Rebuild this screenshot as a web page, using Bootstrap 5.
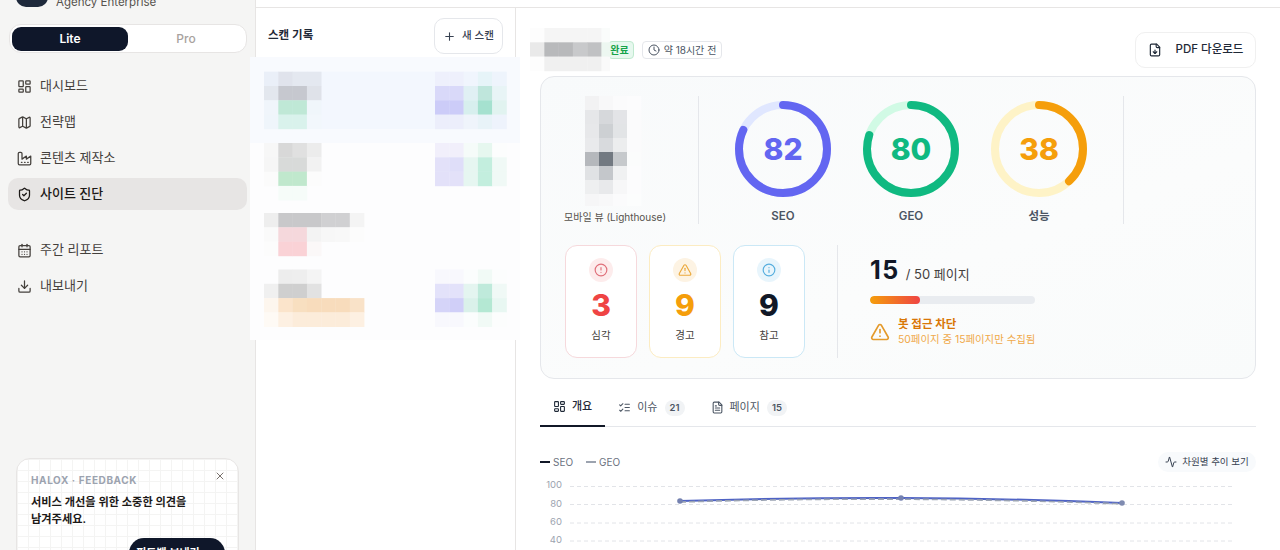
<!DOCTYPE html>
<html lang="ko">
<head>
    <meta charset="UTF-8">
    <meta name="viewport" content="width=device-width, initial-scale=1.0">
    <title>사이트 진단</title>
    <link href="https://cdn.jsdelivr.net/npm/bootstrap@5.3.0/dist/css/bootstrap.min.css" rel="stylesheet">
    <style>
        html, body { height: 550px; overflow: hidden; }
        body { font-family: Inter, "Noto Sans CJK KR", sans-serif; color: #111827; background: #fff; }
        .ico { fill: none; stroke: currentColor; stroke-width: 2; stroke-linecap: round; stroke-linejoin: round; flex: none; }
        .app-root { position: relative; height: 550px; overflow: hidden; }

        .side-bar { width: 256px; flex: none; background: #f5f5f4; border-right: 1px solid #e7e5e4; padding: 0 8px; }
        .brand-row { margin: -23px 8px 0; height: 30px; gap: 8px; }
        .brand-logo { width: 32px; height: 30px; border-radius: 10px; background: #1e293b; }
        .brand-name { font-size: 11.5px; color: #57534e; padding-top: 17px; }
        .plan-switch { margin: 17px 0 0 1px; width: 238px; height: 29px; padding: 2px; background: #fff; border: 1px solid #e7e5e4; border-radius: 12px; }
        .plan-item { flex: 1; border-radius: 9px; font-size: 12px; font-weight: 500; color: #a8a29e; text-align: center; line-height: 24px; height: 24px; }
        .plan-item.on { background: #0f172a; color: #fff; font-weight: 600; }
        .side-nav { margin-top: 17px; gap: 4px; }
        .side-link { height: 32px; width: 239px; padding: 0 9px; gap: 8px; border-radius: 10px; font-size: 13px; color: #44403c; }
        .side-link.on { background: #e7e5e4; color: #1c1917; font-weight: 500; }
        .side-gap { height: 16px; }
        .note-card { position: relative; margin: 156px 0 0 8px; width: 223px; height: 120px; padding: 14px; border: 1px solid #e7e5e4; border-radius: 14px; background-color: #fff; background-image: linear-gradient(#f4f4f3 1px, transparent 1px), linear-gradient(90deg, #f4f4f3 1px, transparent 1px); background-size: 11px 11px; }
        .note-tag { font-size: 10px; font-weight: 700; letter-spacing: .6px; color: #9ca3af; line-height: 14px; }
        .note-text { font-size: 11.2px; font-weight: 600; line-height: 17px; margin-top: 7px; color: #1c1917; }
        .note-close { position: absolute; top: 11px; right: 12px; color: #78716c; }
        .note-btn { position: absolute; top: 79px; right: 13px; width: 96px; height: 30px; background: #0f172a; border-radius: 15px; font-size: 11px; color: #fff; font-weight: 600; }

        .main-wrap { flex: 1; padding-top: 7px; min-width: 0; }
        .main-inner { border-top: 1px solid #e7e5e4; height: 543px; }
        .scan-col { width: 260px; flex: none; border-right: 1px solid #e7e5e4; padding: 10px 12px; }
        .scan-title { font-size: 11.5px; font-weight: 600; color: #1f2937; }
        .scan-new { width: 69px; height: 36px; border: 1px solid #e5e7eb; border-radius: 10px; font-size: 10.5px; font-weight: 500; color: #374151; gap: 6px; padding: 0; background: #fff; }
        .scan-cover { position: absolute; left: 250px; top: 57px; }

        .report-col { flex: 1; padding: 24px 24px 0; min-width: 0; }
        .head-row { height: 36px; }
        .title-slot { position: relative; width: 68px; height: 36px; flex: none; }
        .title-cover { position: absolute; left: -10px; top: -4px; }
        .state-tag { font-size: 10px; font-weight: 600; color: #16a34a; background: #e6f8ee; border: 1px solid #bfe9cf; border-radius: 4px; height: 18px; line-height: 16px; width: 26px; padding-right: 3px; text-align: center; }
        .time-tag { margin-left: 8px; font-size: 10px; color: #4b5563; border: 1px solid #e5e7eb; border-radius: 4px; height: 18px; width: 80px; gap: 4px; background: #fff; }
        .pdf-btn { width: 121px; height: 36px; border: 1px solid #f0f0f0; border-radius: 10px; font-size: 11.5px; font-weight: 500; color: #1f2937; gap: 14px; padding: 0; background: #fff; }
        .score-card { margin-top: 8px; height: 303px; padding: 19px 24px; border: 1px solid #e5e7eb; border-radius: 14px; background: linear-gradient(160deg, #f8fafb, #fbfcfc 60%, #f9fbfb); }
        .top-band { height: 128px; }
        .phone-col { width: 100px; margin-right: 33px; }
        .phone-label { font-size: 10px; color: #57534e; white-space: nowrap; margin-top: 4px; line-height: 14px; }
        .v-rule { width: 1px; background: #e5e7eb; flex: none; }
        .ring-wrap { margin-left: 36px; gap: 32px; margin-right: 36px; }
        .ring-box { position: relative; width: 96px; height: 96px; margin-top: 5px; }
        .ring-num { position: absolute; inset: 0; font-size: 30px; font-weight: 800; line-height: 96px; text-align: center; }
        .ring-label { font-size: 11.5px; font-weight: 600; color: #4b5563; text-align: center; margin-top: 12px; line-height: 14px; }
        .low-band { margin-top: 21px; height: 113px; }
        .sev-wrap { gap: 12px; margin-right: 32px; }
        .sev-card { width: 72px; height: 113px; background: #fff; border: 1px solid; border-radius: 12px; padding-top: 12px; text-align: center; }
        .sev-icon { width: 24px; height: 24px; border-radius: 50%; margin: 0 auto; }
        .sev-num { font-size: 30px; font-weight: 800; line-height: 36px; margin-top: 5px; }
        .sev-label { font-size: 10.5px; color: #44403c; line-height: 14px; margin-top: 6px; }
        .pages-col { margin-left: 32px; width: 170px; }
        .pages-big { font-size: 25px; font-weight: 700; letter-spacing: 1.5px; line-height: 30px; }
        .pages-rest { font-size: 13px; color: #44403c; margin-left: 6px; }
        .pages-head { margin-top: 10px; }
        .pages-bar { height: 8px; width: 165px; margin-top: 11px; background: #e9ecf0; border-radius: 4px; }
        .pages-bar .progress-bar { background: linear-gradient(90deg, #f59e0b, #ef4444); border-radius: 4px; }
        .warn-row { margin-top: 13px; gap: 8px; color: #e49a2b; }
        .warn-title { font-size: 11.5px; font-weight: 700; color: #d97706; line-height: 15px; }
        .warn-sub { font-size: 10.4px; color: #f0a94a; line-height: 15px; }

        .tab-row { margin-top: 8px; border-bottom: 1px solid #e5e7eb; height: 40px; }
        .tab-item { height: 40px; padding: 1px 13px 0; gap: 6px; font-size: 11px; color: #4b5563; }
        .tab-item.on { color: #1f2937; font-weight: 500; border-bottom: 2px solid #111827; }
        .tab-count { font-size: 9.5px; font-weight: 600; color: #4b5563; background: #f1f3f5; border-radius: 10px; width: 20px; height: 16px; line-height: 16px; text-align: center; margin-left: 1px; }
        .legend-row { margin-top: 25px; height: 20px; font-size: 10px; color: #6b7280; }
        .legend-dash { width: 10px; height: 2px; margin-right: 3px; }
        .legend-first { margin-right: 13px; }
        .trend-btn { width: 98px; height: 20px; background: #f8fafc; border-radius: 10px; font-size: 9.5px; color: #374151; gap: 5px; }
        .chart-box { display: block; margin-top: 3px; }
        .chart-box text { font-size: 9.5px; fill: #9ca3af; text-anchor: end; }
    </style>
</head>
<body>
    <svg width="0" height="0" class="position-absolute">
        <symbol id="i-dash" viewBox="0 0 24 24"><rect x="3" y="3" width="7" height="9" rx="1"/><rect x="14" y="3" width="7" height="5" rx="1"/><rect x="14" y="12" width="7" height="9" rx="1"/><rect x="3" y="16" width="7" height="5" rx="1"/></symbol>
        <symbol id="i-map" viewBox="0 0 24 24"><path d="M14.106 5.553a2 2 0 0 0 1.788 0l3.659-1.83A1 1 0 0 1 21 4.619v12.764a1 1 0 0 1-.553.894l-4.553 2.277a2 2 0 0 1-1.788 0l-4.212-2.106a2 2 0 0 0-1.788 0l-3.659 1.83A1 1 0 0 1 3 19.381V6.618a1 1 0 0 1 .553-.894l4.553-2.277a2 2 0 0 1 1.788 0z"/><path d="M15 5.764v15"/><path d="M9 3.236v15"/></symbol>
        <symbol id="i-factory" viewBox="0 0 24 24"><path d="M2 20a2 2 0 0 0 2 2h16a2 2 0 0 0 2-2V8l-7 5V8l-7 5V4a2 2 0 0 0-2-2H4a2 2 0 0 0-2 2Z"/><path d="M17 18h1"/><path d="M12 18h1"/><path d="M7 18h1"/></symbol>
        <symbol id="i-shield" viewBox="0 0 24 24"><path d="M20 13c0 5-3.5 7.5-7.66 8.95a1 1 0 0 1-.67-.01C7.5 20.5 4 18 4 13V6a1 1 0 0 1 1-1c2 0 4.5-1.2 6.24-2.72a1.17 1.17 0 0 1 1.52 0C14.51 3.81 17 5 19 5a1 1 0 0 1 1 1z"/><path d="m9 12 2 2 4-4"/></symbol>
        <symbol id="i-cal" viewBox="0 0 24 24"><path d="M8 2v4"/><path d="M16 2v4"/><rect x="3" y="4" width="18" height="18" rx="2"/><path d="M3 10h18"/><path d="M8 14h.01"/><path d="M12 14h.01"/><path d="M16 14h.01"/><path d="M8 18h.01"/><path d="M12 18h.01"/><path d="M16 18h.01"/></symbol>
        <symbol id="i-down" viewBox="0 0 24 24"><path d="M21 15v4a2 2 0 0 1-2 2H5a2 2 0 0 1-2-2v-4"/><path d="m7 10 5 5 5-5"/><path d="M12 15V3"/></symbol>
        <symbol id="i-x" viewBox="0 0 24 24"><path d="M18 6 6 18"/><path d="m6 6 12 12"/></symbol>
        <symbol id="i-chev" viewBox="0 0 24 24"><path d="m9 18 6-6-6-6"/></symbol>
        <symbol id="i-plus" viewBox="0 0 24 24"><path d="M5 12h14"/><path d="M12 5v14"/></symbol>
        <symbol id="i-clock" viewBox="0 0 24 24"><circle cx="12" cy="12" r="10"/><path d="M12 6v6l4 2"/></symbol>
        <symbol id="i-filedown" viewBox="0 0 24 24"><path d="M15 2H6a2 2 0 0 0-2 2v16a2 2 0 0 0 2 2h12a2 2 0 0 0 2-2V7Z"/><path d="M14 2v4a2 2 0 0 0 2 2h4"/><path d="M12 18v-6"/><path d="m9 15 3 3 3-3"/></symbol>
        <symbol id="i-alert" viewBox="0 0 24 24"><circle cx="12" cy="12" r="10"/><path d="M12 8v4"/><path d="M12 16h.01"/></symbol>
        <symbol id="i-tri" viewBox="0 0 24 24"><path d="m21.73 18-8-14a2 2 0 0 0-3.48 0l-8 14A2 2 0 0 0 4 21h16a2 2 0 0 0 1.73-3"/><path d="M12 9v4"/><path d="M12 17h.01"/></symbol>
        <symbol id="i-info" viewBox="0 0 24 24"><circle cx="12" cy="12" r="10"/><path d="M12 16v-4"/><path d="M12 8h.01"/></symbol>
        <symbol id="i-list" viewBox="0 0 24 24"><path d="m3 17 2 2 4-4"/><path d="m3 7 2 2 4-4"/><path d="M13 6h8"/><path d="M13 12h8"/><path d="M13 18h8"/></symbol>
        <symbol id="i-file" viewBox="0 0 24 24"><path d="M15 2H6a2 2 0 0 0-2 2v16a2 2 0 0 0 2 2h12a2 2 0 0 0 2-2V7Z"/><path d="M14 2v4a2 2 0 0 0 2 2h4"/><path d="M10 9H8"/><path d="M16 13H8"/><path d="M16 17H8"/></symbol>
        <symbol id="i-pulse" viewBox="0 0 24 24"><path d="M22 12h-2.48a2 2 0 0 0-1.93 1.46l-2.35 8.36a.25.25 0 0 1-.48 0L9.24 2.18a.25.25 0 0 0-.48 0l-2.35 8.36A2 2 0 0 1 4.49 12H2"/></symbol>
    </svg>

    <div class="app-root d-flex">
        <!-- 사이드바 -->
        <aside class="side-bar">
            <div class="brand-row d-flex">
                <div class="brand-logo"></div>
                <div class="brand-name">Agency Enterprise</div>
            </div>
            <div class="plan-switch d-flex">
                <div class="plan-item on">Lite</div>
                <div class="plan-item">Pro</div>
            </div>
            <nav class="side-nav d-flex flex-column">
                <div class="side-link d-flex align-items-center"><svg class="ico" width="15" height="15"><use href="#i-dash"/></svg>대시보드</div>
                <div class="side-link d-flex align-items-center"><svg class="ico" width="15" height="15"><use href="#i-map"/></svg>전략맵</div>
                <div class="side-link d-flex align-items-center"><svg class="ico" width="15" height="15"><use href="#i-factory"/></svg>콘텐츠 제작소</div>
                <div class="side-link on d-flex align-items-center"><svg class="ico" width="15" height="15"><use href="#i-shield"/></svg>사이트 진단</div>
                <div class="side-gap"></div>
                <div class="side-link d-flex align-items-center"><svg class="ico" width="15" height="15"><use href="#i-cal"/></svg>주간 리포트</div>
                <div class="side-link d-flex align-items-center"><svg class="ico" width="15" height="15"><use href="#i-down"/></svg>내보내기</div>
            </nav>
            <div class="note-card">
                <div class="note-tag">HALOX · FEEDBACK</div>
                <svg class="ico note-close" width="12" height="12"><use href="#i-x"/></svg>
                <div class="note-text">서비스 개선을 위한 소중한 의견을<br>남겨주세요.</div>
                <div class="note-btn d-flex align-items-center justify-content-center gap-2">피드백 보내기<svg class="ico" width="10" height="10"><use href="#i-chev"/></svg></div>
            </div>
        </aside>

        <div class="main-wrap">
            <div class="main-inner d-flex">
                <!-- 스캔 기록 -->
                <section class="scan-col">
                    <div class="d-flex justify-content-between align-items-center">
                        <div class="scan-title">스캔 기록</div>
                        <button class="btn scan-new d-flex align-items-center justify-content-center"><svg class="ico" width="13" height="13"><use href="#i-plus"/></svg>새 스캔</button>
                    </div>
                </section>

                <!-- 리포트 -->
                <section class="report-col">
                    <div class="head-row d-flex align-items-center">
                        <div class="state-tag order-1">완료</div>
                        <div class="title-slot order-0"><svg class="title-cover" id="titleCover" width="80" height="44"></svg></div>
                        <div class="time-tag d-flex align-items-center justify-content-center order-2"><svg class="ico" width="12" height="12"><use href="#i-clock"/></svg>약 18시간 전</div>
                        <button class="btn pdf-btn d-flex align-items-center justify-content-center ms-auto order-3"><svg class="ico" width="14" height="14"><use href="#i-filedown"/></svg>PDF 다운로드</button>
                    </div>

                    <div class="score-card">
                        <div class="top-band d-flex">
                            <div class="phone-col d-flex flex-column align-items-center">
                                <svg id="phoneCover" width="60" height="112"></svg>
                                <div class="phone-label">모바일 뷰 (Lighthouse)</div>
                            </div>
                            <div class="v-rule"></div>
                            <div class="ring-wrap d-flex">
                                <div>
                                    <div class="ring-box">
                                        <svg width="96" height="96" viewBox="0 0 96 96"><g fill="none" stroke-width="8" transform="rotate(-90 48 48)"><circle cx="48" cy="48" r="44" stroke="#e0e7ff"/><circle cx="48" cy="48" r="44" stroke="#6366f1" stroke-linecap="round" stroke-dasharray="226.7 276.5"/></g></svg>
                                        <div class="ring-num" style="color:#6366f1">82</div>
                                    </div>
                                    <div class="ring-label">SEO</div>
                                </div>
                                <div>
                                    <div class="ring-box">
                                        <svg width="96" height="96" viewBox="0 0 96 96"><g fill="none" stroke-width="8" transform="rotate(-90 48 48)"><circle cx="48" cy="48" r="44" stroke="#d1fae5"/><circle cx="48" cy="48" r="44" stroke="#10b981" stroke-linecap="round" stroke-dasharray="221.2 276.5"/></g></svg>
                                        <div class="ring-num" style="color:#10b981">80</div>
                                    </div>
                                    <div class="ring-label">GEO</div>
                                </div>
                                <div>
                                    <div class="ring-box">
                                        <svg width="96" height="96" viewBox="0 0 96 96"><g fill="none" stroke-width="8" transform="rotate(-90 48 48)"><circle cx="48" cy="48" r="44" stroke="#fef3c7"/><circle cx="48" cy="48" r="44" stroke="#f59e0b" stroke-linecap="round" stroke-dasharray="105 276.5"/></g></svg>
                                        <div class="ring-num" style="color:#f59e0b">38</div>
                                    </div>
                                    <div class="ring-label">성능</div>
                                </div>
                            </div>
                            <div class="v-rule"></div>
                        </div>

                        <div class="low-band d-flex">
                            <div class="sev-wrap d-flex">
                                <div class="sev-card" style="border-color:#f6d9dc">
                                    <div class="sev-icon d-flex align-items-center justify-content-center" style="background:#fdecec;color:#e0707a"><svg class="ico" width="14" height="14"><use href="#i-alert"/></svg></div>
                                    <div class="sev-num" style="color:#ef4444">3</div>
                                    <div class="sev-label">심각</div>
                                </div>
                                <div class="sev-card" style="border-color:#fcecc2">
                                    <div class="sev-icon d-flex align-items-center justify-content-center" style="background:#fdf3e3;color:#eba93c"><svg class="ico" width="14" height="14"><use href="#i-tri"/></svg></div>
                                    <div class="sev-num" style="color:#f59e0b">9</div>
                                    <div class="sev-label">경고</div>
                                </div>
                                <div class="sev-card" style="border-color:#cbe8f6">
                                    <div class="sev-icon d-flex align-items-center justify-content-center" style="background:#e8f5fc;color:#56aede"><svg class="ico" width="14" height="14"><use href="#i-info"/></svg></div>
                                    <div class="sev-num" style="color:#111827">9</div>
                                    <div class="sev-label">참고</div>
                                </div>
                            </div>
                            <div class="v-rule"></div>
                            <div class="pages-col">
                                <div class="pages-head d-flex align-items-baseline"><span class="pages-big">15</span><span class="pages-rest">/ 50 페이지</span></div>
                                <div class="progress pages-bar"><div class="progress-bar" style="width:30%"></div></div>
                                <div class="warn-row d-flex align-items-center">
                                    <svg class="ico" width="20" height="20"><use href="#i-tri"/></svg>
                                    <div>
                                        <div class="warn-title">봇 접근 차단</div>
                                        <div class="warn-sub">50페이지 중 15페이지만 수집됨</div>
                                    </div>
                                </div>
                            </div>
                        </div>
                    </div>

                    <div class="tab-row d-flex">
                        <div class="tab-item on d-flex align-items-center"><svg class="ico" width="13" height="13"><use href="#i-dash"/></svg>개요</div>
                        <div class="tab-item d-flex align-items-center"><svg class="ico" width="13" height="13"><use href="#i-list"/></svg>이슈<span class="tab-count">21</span></div>
                        <div class="tab-item d-flex align-items-center"><svg class="ico" width="13" height="13"><use href="#i-file"/></svg>페이지<span class="tab-count">15</span></div>
                    </div>

                    <div class="legend-row d-flex align-items-center">
                        <span class="legend-dash" style="background:#111827"></span><span class="legend-first">SEO</span>
                        <span class="legend-dash" style="background:#9ca3af"></span><span>GEO</span>
                        <div class="trend-btn d-flex align-items-center justify-content-center ms-auto"><svg class="ico" width="12" height="12"><use href="#i-pulse"/></svg>차원별 추이 보기</div>
                    </div>

                    <svg class="chart-box" width="716" height="75" viewBox="540 475 716 75">
                        <g stroke="#e2e4e8" stroke-dasharray="4 3">
                            <path d="M570 486.5H1233"/><path d="M570 504.5H1233"/><path d="M570 523H1233"/><path d="M570 541H1233"/>
                        </g>
                        <text x="562" y="488">100</text><text x="562" y="507">80</text><text x="562" y="525">60</text><text x="562" y="543">40</text>
                        <path d="M680 501 Q790 497.6 901 498 Q1010 498.5 1122 503" fill="none" stroke="#4f63c4" stroke-width="2"/>
                        <path d="M680 502 Q790 498.8 901 499.2 Q1010 499.8 1122 503.8" fill="none" stroke="#9aa3b2" stroke-width="1.6" stroke-dasharray="6 3"/>
                        <circle cx="680" cy="501" r="2.8" fill="#7481b0"/><circle cx="901" cy="498" r="2.8" fill="#7481b0"/><circle cx="1122" cy="503" r="2.8" fill="#7f8bb0"/>
                    </svg>
                </section>
            </div>
        </div>

        <!-- 가려진 스캔 목록 -->
        <svg class="scan-cover" id="scanCover" width="270" height="283" viewBox="250 57 270 283"></svg>
    </div>

    <script>
        // 모자이크 블록: [x, y, 셀 크기, 색상 행들]
        function paint(svg, blocks) {
            let html = '';
            blocks.forEach(function (b) {
                b[3].forEach(function (row, r) {
                    row.split(' ').forEach(function (c, i) {
                        if (c === '-') return;
                        html += '<rect x="' + (b[0] + i * b[2]) + '" y="' + (b[1] + r * b[2]) + '" width="' + (b[2] + .3) + '" height="' + (b[2] + .3) + '" fill="#' + c + '"/>';
                    });
                });
            });
            svg.innerHTML = html;
        }

        const scanCover = document.getElementById('scanCover');
        scanCover.innerHTML = '<rect x="250" y="57" width="270" height="283" fill="#fdfdfe"/><rect x="250" y="57" width="270" height="86" fill="#f8fafe"/><rect x="264" y="71.5" width="242" height="57.5" fill="#f3f7fe"/>';
        const rectsHolder = document.createElementNS('http://www.w3.org/2000/svg', 'g');
        scanCover.appendChild(rectsHolder);
        paint(rectsHolder, [
            [264, 71.7, 14.3, ['eaeff8 e0e3ec e4e8f0 e4e8f0', 'e3e7ee c6c8cf c6c8cf dfe2e9', 'f0f5fb bfe8d6 bfe8d6 f0f6fb', 'eff5fb d9f2ec d9f2ec f2f7fc']],
            [435, 71.7, 14.3, ['eef0fc eef0fc f0f5fd e6f4f8 eef4fc', 'd9d9f9 d9d9f9 e0f0f4 bfe6dc e8f4f6', 'ccccf8 ccccf8 d7efee a5e1cf e1f3f0', 'eceefb eceefb eff4fb e8f3f8 eef3fc']],
            [264, 143, 14.3, ['f7f7f7 d8d8d8 e0e0e0 ececec', 'f6f6f6 d8dad9 d8dad9 f2f2f2', 'fbfbfb c0e8cd c0e8cd fcfcfc', '- f6fcf9 f6fcf9 -']],
            [435, 143, 14.3, ['f1effb f1effb f5fbf9 e6f7ef fcfdfd', 'e3e1f9 dfdef9 e6f6f1 c3eede f0f9f6', 'e3e1f9 e3e1f9 e6f6f1 c3eede f0f9f6']],
            [264, 213, 14.3, ['eeeeee c8c8ca c8c8ca c8c8ca d0d0d2 d0d0d2 f4f4f4', 'fafafa f5d8dc f5d8dc f3f3f3 f7f7f7 f8f8f8 fcfcfc', 'fcfcfc fad2d6 fad2d6 fbf8f8']],
            [264, 269.5, 14.3, ['- ededed eeeeee f4f4f4', 'f0f0f0 cfcfcf cfcfcf e2e2e2', 'fdf6ee fbe4cb f8dfc0 f8dcbc f8dcbc f8dcbc f9e2c8', 'fefaf5 fdf0e2 fcecda fcecda fcecda fcecda fdf0e2']],
            [435, 269.5, 14.3, ['f8f8fd f8f8fd fbfdfd f1faf6 fcfdfd', 'e3e2fa e3e2fa e4f5f0 bfeadb f0f9f6', 'd5d4f8 d0cff8 daf1ea b4e8d3 e8f7f2', 'f8f8fd f8f8fd fbfdfd f1faf6 fcfdfd']]
        ]);

        paint(document.getElementById('titleCover'), [
            [0, 0, 14.3, ['fdfdfd f5f5f5 f5f5f5 f5f5f5 f5f5f5 fafcfb', 'e9e9e9 b8b9bb b8b9bb c8c9cb c0c1c3 edf7f1', 'fdfdfd f0f0f0 f0f0f0 f0f0f0 f0f0f0 fafafa']]
        ]);

        paint(document.getElementById('phoneCover'), [
            [0, 0, 14, ['f2f2f3 f8f8f9 fbfbfc fcfcfd', 'e6e7e9 d6d8db e3e4e7 fbfbfc', 'e7e8ea cdd0d3 e2e4e6 fbfbfc', 'e9eaec d8dadd ecedee fbfbfc', 'b5b8bc 727981 c6c9cc fbfcfc', 'e0e2e4 c4c7cb f0f1f2 fcfcfd', 'eeeff0 e8e9eb f7f7f8 fcfcfd', 'f6f6f7 f8f8f9 fbfbfc fcfdfd']]
        ]);
    </script>
    <script src="https://cdn.jsdelivr.net/npm/bootstrap@5.3.0/dist/js/bootstrap.bundle.min.js"></script>
</body>
</html>
